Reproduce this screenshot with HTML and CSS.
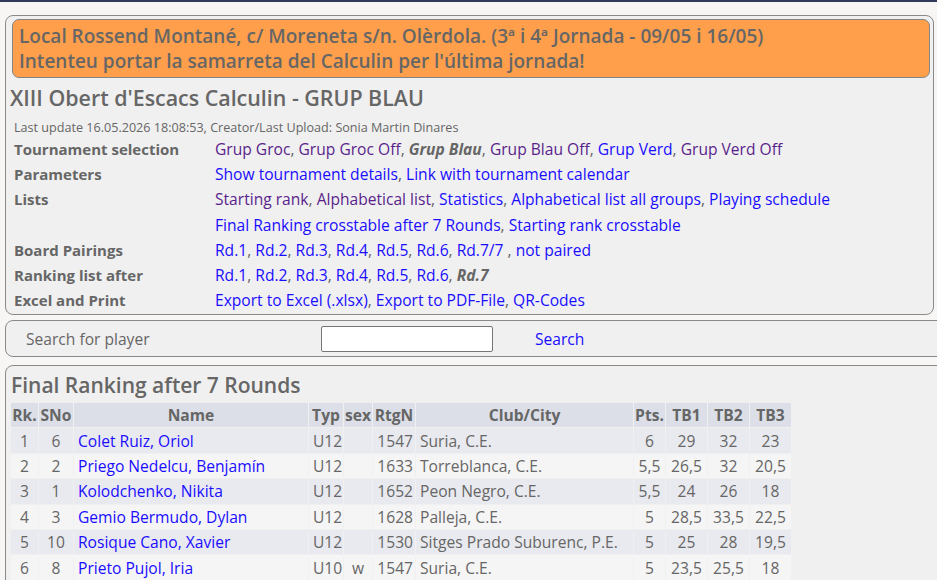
FILE: index.html
```html
<!DOCTYPE html>
<html lang="ca">
<head>
    <meta charset="UTF-8">
    <meta name="viewport" content="width=device-width, initial-scale=1.0">
    <title>XIII Obert d'Escacs Calculin - GRUP BLAU</title>
    <link rel="stylesheet" href="styles.css">
</head>
<body>
    <div class="topbar"></div>

    <div class="box head">
        <div class="notice">
            Local Rossend Montané, c/ Moreneta s/n. Olèrdola. (3ª i 4ª Jornada - 09/05 i 16/05)<br>
            Intenteu portar la samarreta del Calculin per l'última jornada!
        </div>
        <h1>XIII Obert d'Escacs Calculin - GRUP BLAU</h1>
        <p class="update">Last update 16.05.2026 18:08:53, Creator/Last Upload: Sonia Martin Dinares</p>

        <table class="menu">
            <tr>
                <th>Tournament selection</th>
                <td><a href="#" class="seen">Grup Groc</a>, <a href="#" class="seen">Grup Groc Off</a>, <b><i>Grup Blau</i></b>, <a href="#" class="seen">Grup Blau Off</a>, <a href="#">Grup Verd</a>, <a href="#" class="seen">Grup Verd Off</a></td>
            </tr>
            <tr>
                <th>Parameters</th>
                <td><a href="#">Show tournament details</a>, <a href="#">Link with tournament calendar</a></td>
            </tr>
            <tr>
                <th>Lists</th>
                <td><a href="#" class="seen">Starting rank</a>, <a href="#" class="seen">Alphabetical list</a>, <a href="#">Statistics</a>, <a href="#">Alphabetical list all groups</a>, <a href="#">Playing schedule</a></td>
            </tr>
            <tr>
                <th></th>
                <td><a href="#">Final Ranking crosstable after 7 Rounds</a>, <a href="#">Starting rank crosstable</a></td>
            </tr>
            <tr>
                <th>Board Pairings</th>
                <td><a href="#">Rd.1</a>, <a href="#">Rd.2</a>, <a href="#">Rd.3</a>, <a href="#">Rd.4</a>, <a href="#">Rd.5</a>, <a href="#">Rd.6</a>, <a href="#">Rd.7/7</a> , <a href="#">not paired</a></td>
            </tr>
            <tr>
                <th>Ranking list after</th>
                <td><a href="#">Rd.1</a>, <a href="#">Rd.2</a>, <a href="#">Rd.3</a>, <a href="#">Rd.4</a>, <a href="#">Rd.5</a>, <a href="#">Rd.6</a>, <b><i>Rd.7</i></b></td>
            </tr>
            <tr>
                <th>Excel and Print</th>
                <td><a href="#">Export to Excel (.xlsx)</a>, <a href="#">Export to PDF-File</a>, <a href="#">QR-Codes</a></td>
            </tr>
        </table>
    </div>

    <div class="box search">
        <span class="search-label">Search for player</span>
        <input type="text" class="search-input">
        <a href="#" class="search-link">Search</a>
    </div>

    <div class="box ranking">
        <h2>Final Ranking after 7 Rounds</h2>
        <table class="rank">
            <thead>
                <tr>
                    <th class="c-rk">Rk.</th>
                    <th class="c-sno">SNo</th>
                    <th class="c-name">Name</th>
                    <th class="c-typ">Typ</th>
                    <th class="c-sex">sex</th>
                    <th class="c-rtg">RtgN</th>
                    <th class="c-club">Club/City</th>
                    <th class="c-pts">Pts.</th>
                    <th class="c-tb1">TB1</th>
                    <th class="c-tb2">TB2</th>
                    <th class="c-tb3">TB3</th>
                </tr>
            </thead>
            <tbody>
                <tr>
                    <td class="mid">1</td><td class="mid">6</td><td><a href="#">Colet Ruiz, Oriol</a></td><td>U12</td><td class="mid"></td><td class="right">1547</td><td>Suria, C.E.</td><td class="mid">6</td><td class="mid">29</td><td class="mid">32</td><td class="mid">23</td>
                </tr>
                <tr>
                    <td class="mid">2</td><td class="mid">2</td><td><a href="#">Priego Nedelcu, Benjamín</a></td><td>U12</td><td class="mid"></td><td class="right">1633</td><td>Torreblanca, C.E.</td><td class="mid">5,5</td><td class="mid">26,5</td><td class="mid">32</td><td class="mid">20,5</td>
                </tr>
                <tr>
                    <td class="mid">3</td><td class="mid">1</td><td><a href="#">Kolodchenko, Nikita</a></td><td>U12</td><td class="mid"></td><td class="right">1652</td><td>Peon Negro, C.E.</td><td class="mid">5,5</td><td class="mid">24</td><td class="mid">26</td><td class="mid">18</td>
                </tr>
                <tr>
                    <td class="mid">4</td><td class="mid">3</td><td><a href="#">Gemio Bermudo, Dylan</a></td><td>U12</td><td class="mid"></td><td class="right">1628</td><td>Palleja, C.E.</td><td class="mid">5</td><td class="mid">28,5</td><td class="mid">33,5</td><td class="mid">22,5</td>
                </tr>
                <tr>
                    <td class="mid">5</td><td class="mid">10</td><td><a href="#">Rosique Cano, Xavier</a></td><td>U12</td><td class="mid"></td><td class="right">1530</td><td>Sitges Prado Suburenc, P.E.</td><td class="mid">5</td><td class="mid">25</td><td class="mid">28</td><td class="mid">19,5</td>
                </tr>
                <tr>
                    <td class="mid">6</td><td class="mid">8</td><td><a href="#">Prieto Pujol, Iria</a></td><td>U10</td><td class="mid">w</td><td class="right">1547</td><td>Suria, C.E.</td><td class="mid">5</td><td class="mid">23,5</td><td class="mid">25,5</td><td class="mid">18</td>
                </tr>
            </tbody>
        </table>
    </div>
</body>
</html>
```

FILE: styles.css
```css
html { overflow-x: hidden; }
body { margin: 0; background: #f8f6f5; color: #666; font-family: "Open Sans", "Noto Sans", sans-serif; font-size: 15.6px; }
a { color: #1a0dff; text-decoration: none; }
a.seen { color: #5a1f8c; }

.topbar { height: 2px; background: #323a5a; margin-bottom: 13px; }

.box { margin: 0 3px 6px 5px; background: #f0f0f0; border: 1px solid #8a8a8a; border-radius: 8px; }
.search, .ranking { margin-right: -10px; }

/* header box */
.head { padding: 3px 3px 1px 6px; margin-bottom: 5px; }
.notice { background: #ff9f4b; border: 1px solid #858585; border-radius: 7px; padding: 4px 6px 3px; font-size: 19px; font-weight: 600; line-height: 25px; color: #666; }
.head h1 { margin: 6px 0 0 -2px; font-size: 21.4px; font-weight: 600; line-height: 28px; }
.update { margin: 8px 0 0 2px; font-size: 12.6px; line-height: 16px; }
.menu { border-collapse: collapse; margin-left: 2px; }
.menu th { text-align: left; font-size: 15px; font-weight: bold; width: 201px; padding: 0; height: 25.3px; vertical-align: middle; white-space: nowrap; }
.menu td { padding: 0; white-space: nowrap; }

/* search bar */
.search { display: flex; align-items: center; height: 35px; padding-left: 20px; margin-bottom: 8px; }
.search-label { width: 295px; }
.search-input { box-sizing: border-box; width: 172px; height: 26px; border: 1px solid #767676; border-radius: 2px; background: #fff; padding: 0; margin: 0; }
.search-link { margin-left: 42px; }

/* ranking table */
.ranking { padding: 0 0 0 5px; height: 240px; overflow: hidden; }
.ranking h2 { margin: 6px 0 4px; font-size: 21px; font-weight: 600; line-height: 26px; }
.rank { table-layout: fixed; width: 782px; border-collapse: separate; border-spacing: 1px; margin-left: -1px; }
.rank th, .rank td { box-sizing: border-box; padding: 0 2px 0 4px; height: 24.4px; white-space: nowrap; overflow: hidden; }
.rank th { padding: 0; background: #dcdfe7; text-align: center; font-weight: bold; }
.rank tbody tr:nth-child(odd) td { background: #e9eaef; }
.rank tbody tr:nth-child(even) td { background: #f5f5f5; }
.rank .mid { padding: 0 1px; text-align: center; }
.rank .right { text-align: right; }
.c-rk { width: 27px; }
.c-sno { width: 34px; }
.c-name { width: 234px; }
.c-typ { width: 34px; }
.c-sex { width: 28px; }
.c-rtg { width: 42px; }
.c-club { width: 217px; }
.c-pts { width: 31px; }
.c-tb1 { width: 41px; }
.c-tb2 { width: 41px; }
.c-tb3 { width: 41px; }
```
